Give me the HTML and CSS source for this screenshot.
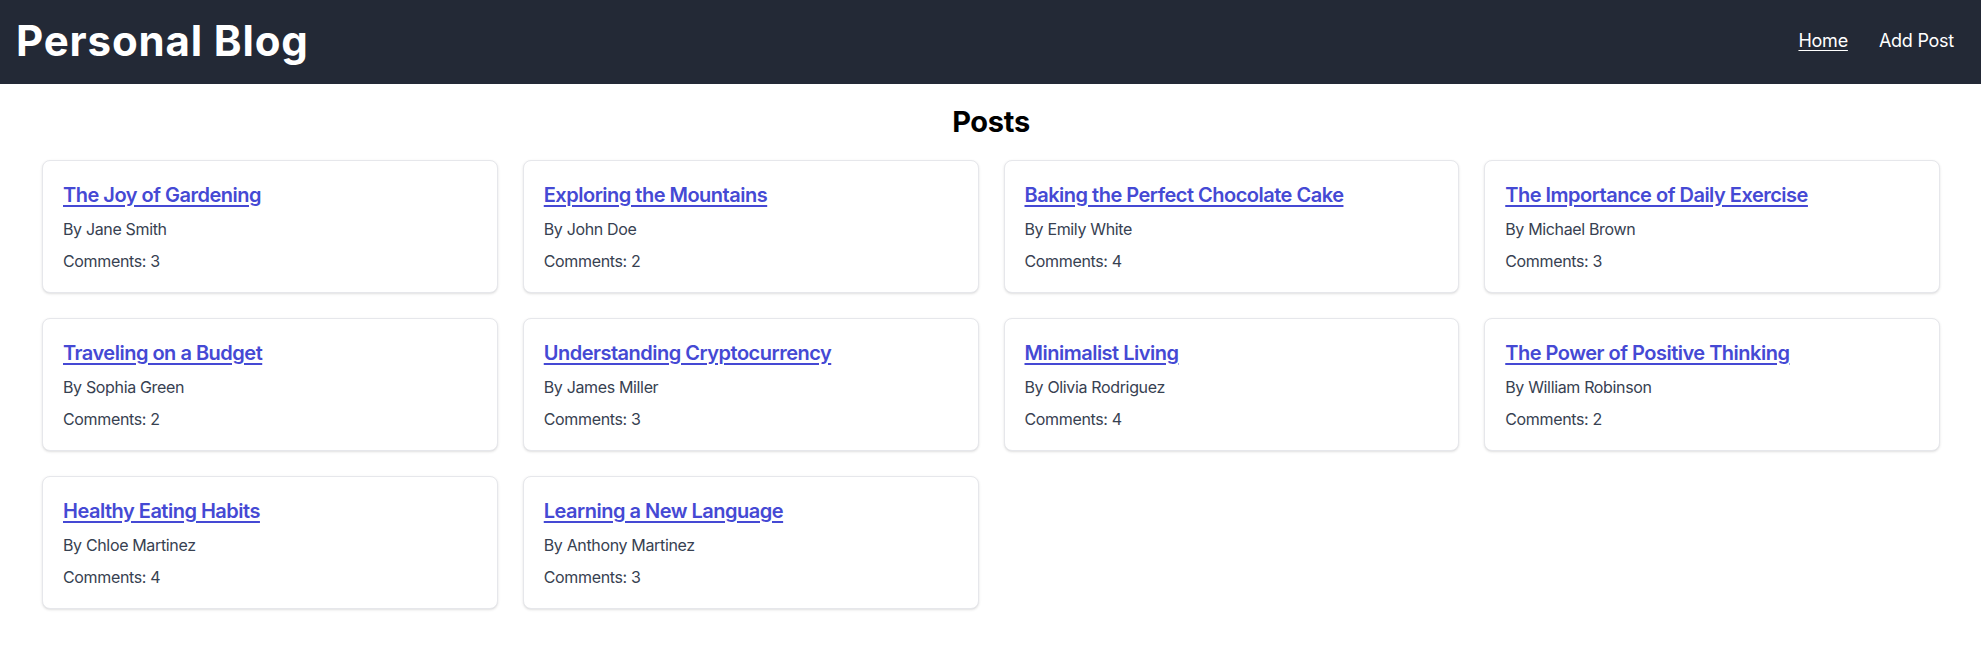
FILE: index.html
```html
<!DOCTYPE html>
<html lang="en">
<head>
<meta charset="utf-8">
<title>Personal Blog</title>
<link rel="stylesheet" href="styles.css">
</head>
<body>
<header class="topbar">
  <h1 class="brand">Personal Blog</h1>
  <nav class="nav">
    <a class="nav-link active" href="#">Home</a>
    <a class="nav-link" href="#">Add Post</a>
  </nav>
</header>
<main class="content">
  <h2 class="page-title">Posts</h2>
  <div class="grid">
    <article class="card"><a class="card-title" href="#">The Joy of Gardening</a><p class="meta">By Jane Smith</p><p class="meta">Comments: 3</p></article>
    <article class="card"><a class="card-title" href="#">Exploring the Mountains</a><p class="meta">By John Doe</p><p class="meta">Comments: 2</p></article>
    <article class="card"><a class="card-title" href="#">Baking the Perfect Chocolate Cake</a><p class="meta">By Emily White</p><p class="meta">Comments: 4</p></article>
    <article class="card"><a class="card-title" href="#">The Importance of Daily Exercise</a><p class="meta">By Michael Brown</p><p class="meta">Comments: 3</p></article>
    <article class="card"><a class="card-title" href="#">Traveling on a Budget</a><p class="meta">By Sophia Green</p><p class="meta">Comments: 2</p></article>
    <article class="card"><a class="card-title" href="#">Understanding Cryptocurrency</a><p class="meta">By James Miller</p><p class="meta">Comments: 3</p></article>
    <article class="card"><a class="card-title" href="#">Minimalist Living</a><p class="meta">By Olivia Rodriguez</p><p class="meta">Comments: 4</p></article>
    <article class="card"><a class="card-title" href="#">The Power of Positive Thinking</a><p class="meta">By William Robinson</p><p class="meta">Comments: 2</p></article>
    <article class="card"><a class="card-title" href="#">Healthy Eating Habits</a><p class="meta">By Chloe Martinez</p><p class="meta">Comments: 4</p></article>
    <article class="card"><a class="card-title" href="#">Learning a New Language</a><p class="meta">By Anthony Martinez</p><p class="meta">Comments: 3</p></article>
  </div>
</main>
</body>
</html>
```
FILE: styles.css
```css
* { box-sizing: border-box; }
html, body { margin: 0; padding: 0; background: #ffffff; }
body { font-family: Inter, "Noto Sans", "Liberation Sans", sans-serif; color: #111827; }

.topbar {
  height: 84px;
  background: #232936;
  display: flex;
  align-items: center;
  justify-content: space-between;
  padding: 0 27px 3px 16px;
}
.brand {
  margin: 0;
  font-size: 42px;
  line-height: 50px;
  font-weight: 700;
  color: #ffffff;
  letter-spacing: 0.85px;
}
.nav { display: flex; gap: 31px; }
.nav-link {
  color: #ffffff;
  font-size: 18px;
  line-height: 27px;
  font-weight: 400;
  text-decoration: none;
  letter-spacing: -0.25px;
}
.nav-link.active { text-decoration: underline; text-underline-offset: 3px; }

.content { padding: 20px 41px 20px 42px; }
.page-title {
  margin: 0 0 20px;
  text-align: center;
  font-size: 29px;
  line-height: 36px;
  font-weight: 700;
  color: #000000;
  letter-spacing: -0.3px;
}
.grid {
  display: grid;
  grid-template-columns: repeat(4, 1fr);
  gap: 25px;
}
.card {
  background: #fff;
  border: 1px solid #e6e7eb;
  border-radius: 8px;
  padding: 19.5px 20px;
  box-shadow: 0 1px 3px rgba(0,0,0,0.1), 0 1px 2px -1px rgba(0,0,0,0.1);
}
.card-title {
  display: block;
  width: fit-content;
  font-size: 20px;
  line-height: 28px;
  font-weight: 600;
  color: #4549d4;
  text-decoration: underline;
  text-underline-offset: 3px;
  letter-spacing: -0.5px;
  margin-bottom: 8px;
}
.meta {
  margin: 0 0 8px;
  font-size: 16px;
  line-height: 24px;
  color: #374151;
  letter-spacing: -0.35px;
}
.meta:last-child { margin-bottom: 0; }
```
